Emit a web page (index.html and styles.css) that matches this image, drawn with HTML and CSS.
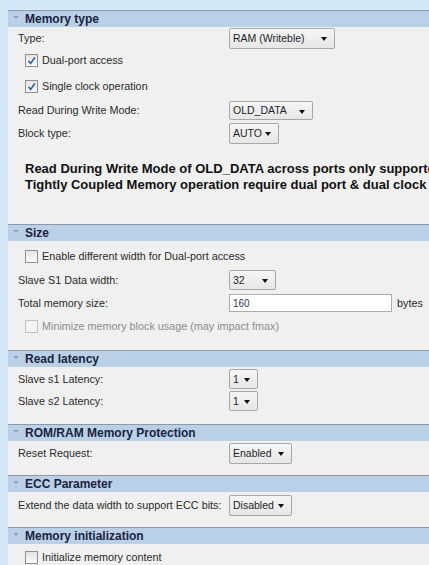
FILE: index.html
```html
<!DOCTYPE html>
<html>
<head>
<meta charset="utf-8">
<link rel="stylesheet" href="styles.css">
</head>
<body>
<div class="page">
  <div class="panel">

    <div class="section-head"><span class="twisty"></span>Memory type</div>
    <div class="row r-type"><span class="label">Type:</span><span class="combo w-ram">RAM (Writeble)<i class="arrow"></i></span></div>
    <div class="row check-row r-dual"><span class="box checked"><svg viewBox="0 0 10 10"><path d="M2.2 5.2 L4.2 7.6 L8 2.2"/></svg></span>Dual-port access</div>
    <div class="row check-row r-single"><span class="box checked"><svg viewBox="0 0 10 10"><path d="M2.2 5.2 L4.2 7.6 L8 2.2"/></svg></span>Single clock operation</div>
    <div class="row r-rdw"><span class="label">Read During Write Mode:</span><span class="combo w-old">OLD_DATA<i class="arrow"></i></span></div>
    <div class="row r-block"><span class="label">Block type:</span><span class="combo w-auto">AUTO<i class="arrow"></i></span></div>
    <div class="message">
      <div>Read During Write Mode of OLD_DATA across ports only supported in Stratix family.</div>
      <div>Tightly Coupled Memory operation require dual port &amp; dual clock selection.</div>
    </div>

    <div class="section-head h-size"><span class="twisty"></span>Size</div>
    <div class="row check-row r-enable"><span class="box"></span>Enable different width for Dual-port access</div>
    <div class="row r-s1w"><span class="label">Slave S1 Data width:</span><span class="combo w-32">32<i class="arrow"></i></span></div>
    <div class="row r-total"><span class="label">Total memory size:</span><span class="field">160</span><span class="unit">bytes</span></div>
    <div class="row check-row disabled r-min"><span class="box"></span>Minimize memory block usage (may impact fmax)</div>

    <div class="section-head h-lat"><span class="twisty"></span>Read latency</div>
    <div class="row r-s1l"><span class="label">Slave s1 Latency:</span><span class="combo w-1">1<i class="arrow"></i></span></div>
    <div class="row r-s2l"><span class="label">Slave s2 Latency:</span><span class="combo w-1">1<i class="arrow"></i></span></div>

    <div class="section-head h-rom"><span class="twisty"></span>ROM/RAM Memory Protection</div>
    <div class="row r-reset"><span class="label">Reset Request:</span><span class="combo w-en">Enabled<i class="arrow"></i></span></div>

    <div class="section-head h-ecc"><span class="twisty"></span>ECC Parameter</div>
    <div class="row r-ecc"><span class="label">Extend the data width to support ECC bits:</span><span class="combo w-en">Disabled<i class="arrow"></i></span></div>

    <div class="section-head h-init"><span class="twisty"></span>Memory initialization</div>
    <div class="row check-row r-init"><span class="box"></span>Initialize memory content</div>

  </div>
</div>
</body>
</html>
```

FILE: styles.css
```css
html, body {
  margin: 0;
  padding: 0;
}

body {
  width: 429px;
  height: 565px;
  overflow: hidden;
  background: #d5e8f8;
  font-family: "Liberation Sans", Arial, sans-serif;
  font-size: 10.8px;
  color: #2a2a2a;
}

.page {
  padding: 10px 0 0 8px;
}

.panel {
  background: #f0f0f0;
  height: 555px;
  overflow: hidden;
}

/* collapsible group header */
.section-head {
  display: flex;
  align-items: center;
  height: 16px;
  border-top: 1px solid #8d99a6;
  background: #b9d0e7;
  font-weight: bold;
  font-size: 12px;
  color: #1a2340;
  white-space: nowrap;
  padding-left: 5px;
}

.twisty {
  width: 0;
  height: 0;
  border-left: 3px solid transparent;
  border-right: 3px solid transparent;
  border-top: 3px solid #8e9fb3;
  margin-right: 6px;
  margin-top: -3px;
}

.h-size { margin-top: 31px; }
.h-lat  { margin-top: 13px; }
.h-rom  { margin-top: 12px; }
.h-ecc  { margin-top: 11px; }
.h-init { margin-top: 11px; }

/* form rows */
.row {
  display: flex;
  align-items: center;
  height: 22px;
  padding-left: 10px;
  white-space: nowrap;
}

.label {
  width: 211px;
  flex: none;
}

.check-row {
  padding-left: 17px;
}

.r-type   { margin-top: 0; }
.r-single { margin-top: 4px; }
.r-rdw    { margin-top: 2px; }
.r-block  { margin-top: 1px; }
.r-enable { margin-top: 4px; }
.r-s1w    { margin-top: 2px; }
.r-total  { margin-top: 1px; }
.r-min    { margin-top: 1px; }
.r-s1l    { margin-top: 1px; }
.r-reset  { margin-top: 1px; }
.r-ecc    { margin-top: 2px; }
.r-init   { margin-top: 2px; }

/* checkbox */
.box {
  width: 11px;
  height: 11px;
  border: 1px solid #8e8f8f;
  background: linear-gradient(#e4e4e4, #fbfbfb);
  margin-right: 4px;
  flex: none;
  display: flex;
}

.box svg {
  width: 11px;
  height: 11px;
}

.box path {
  fill: none;
  stroke: #2d5fc4;
  stroke-width: 1.5;
}

.disabled {
  color: #8c8c8c;
}

.disabled .box {
  border-color: #c2c2c2;
  background: #f3f3f3;
}

/* drop-down combo */
.combo {
  position: relative;
  display: flex;
  align-items: center;
  height: 19px;
  box-sizing: border-box;
  border: 1px solid #a7a7a7;
  border-radius: 2px;
  background: linear-gradient(#f6f6f6, #e6e6e6);
  padding-left: 3px;
  font-size: 10.5px;
  color: #1e1e2a;
}

.arrow {
  position: absolute;
  right: 7px;
  top: 8px;
  width: 0;
  height: 0;
  border-left: 3px solid transparent;
  border-right: 3px solid transparent;
  border-top: 4px solid #111;
}

.w-ram  { width: 106px; height: 21px; }
.w-old  { width: 84px; }
.w-auto { width: 50px; height: 21px; }
.w-32   { width: 47px; height: 20px; }
.w-1    { width: 29px; height: 20px; }
.w-en   { width: 63px; height: 21px; }

/* text field */
.field {
  display: flex;
  align-items: center;
  width: 163px;
  height: 18px;
  box-sizing: border-box;
  border: 1px solid #ababab;
  background: #fff;
  padding-left: 3px;
  font-size: 10px;
  color: #3a3560;
}

.unit {
  margin-left: 5px;
}

/* bold warning text */
.message {
  margin-top: 17px;
  padding-left: 17px;
  font-weight: bold;
  font-size: 13px;
  line-height: 16px;
  color: #111;
  white-space: nowrap;
}
```
